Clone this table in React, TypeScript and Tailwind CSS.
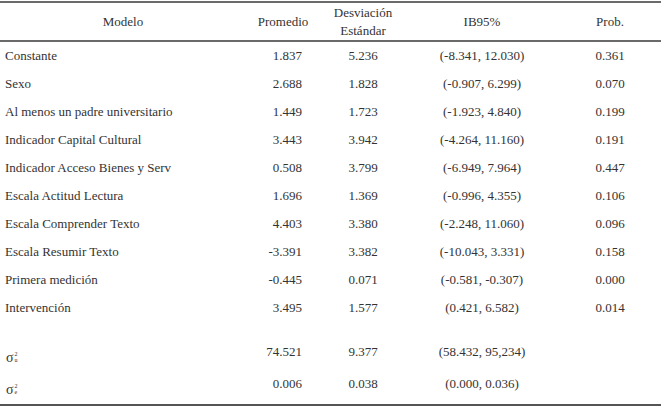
import React from 'react'

const rows = [
  ['Constante', '1.837', '5.236', '(-8.341, 12.030)', '0.361'],
  ['Sexo', '2.688', '1.828', '(-0.907, 6.299)', '0.070'],
  ['Al menos un padre universitario', '1.449', '1.723', '(-1.923, 4.840)', '0.199'],
  ['Indicador Capital Cultural', '3.443', '3.942', '(-4.264, 11.160)', '0.191'],
  ['Indicador Acceso Bienes y Serv', '0.508', '3.799', '(-6.949, 7.964)', '0.447'],
  ['Escala Actitud Lectura', '1.696', '1.369', '(-0.996, 4.355)', '0.106'],
  ['Escala Comprender Texto', '4.403', '3.380', '(-2.248, 11.060)', '0.096'],
  ['Escala Resumir Texto', '-3.391', '3.382', '(-10.043, 3.331)', '0.158'],
  ['Primera medición', '-0.445', '0.071', '(-0.581, -0.307)', '0.000'],
  ['Intervención', '3.495', '1.577', '(0.421, 6.582)', '0.014'],
]

const cols = 'grid grid-cols-[246px_74px_86px_152px_104px]'

const Sigma = ({ sub }: { sub: string }) => (
  <span className="inline-flex items-center leading-none">
    <span className="text-[14px]">σ</span>
    <span className="flex flex-col text-[6px] leading-[6px] ml-[1px] -mt-[2px]">
      <span>2</span>
      <span>{sub}</span>
    </span>
  </span>
)

const App = () => {
  return (
    <div className="w-[664px] h-[406px] bg-white text-[#333] text-[13px] font-[family-name:'Liberation_Serif',serif]">
      <div className="w-[661px] pt-[1px]">
        <div className={`${cols} h-[41px] items-center border-t-2 border-b-2 border-[#6a6a6a] text-center`}>
          <div>Modelo</div>
          <div>Promedio</div>
          <div className="leading-[18px]">Desviación<br />Estándar</div>
          <div>IB95%</div>
          <div>Prob.</div>
        </div>
        {rows.map((r, i) => (
          <div key={i} className={`${cols} h-[28px] items-center`}>
            <div className="pl-[5px]">{r[0]}</div>
            <div className="text-right pr-[18px]">{r[1]}</div>
            <div className="text-center">{r[2]}</div>
            <div className="text-center">{r[3]}</div>
            <div className="text-center">{r[4]}</div>
          </div>
        ))}
        <div className={`${cols} h-[46px] pt-[20px] items-start`}>
          <div className="pl-[6px] pt-[6px]"><Sigma sub="u" /></div>
          <div className="text-right pr-[18px]">74.521</div>
          <div className="text-center">9.377</div>
          <div className="text-center">(58.432, 95,234)</div>
          <div></div>
        </div>
        <div className={`${cols} h-[38px] items-start pt-[6px] border-b-2 border-[#555]`}>
          <div className="pl-[6px] pt-[6px]"><Sigma sub="e" /></div>
          <div className="text-right pr-[18px]">0.006</div>
          <div className="text-center">0.038</div>
          <div className="text-center">(0.000, 0.036)</div>
          <div></div>
        </div>
      </div>
    </div>
  )
}

export default App
